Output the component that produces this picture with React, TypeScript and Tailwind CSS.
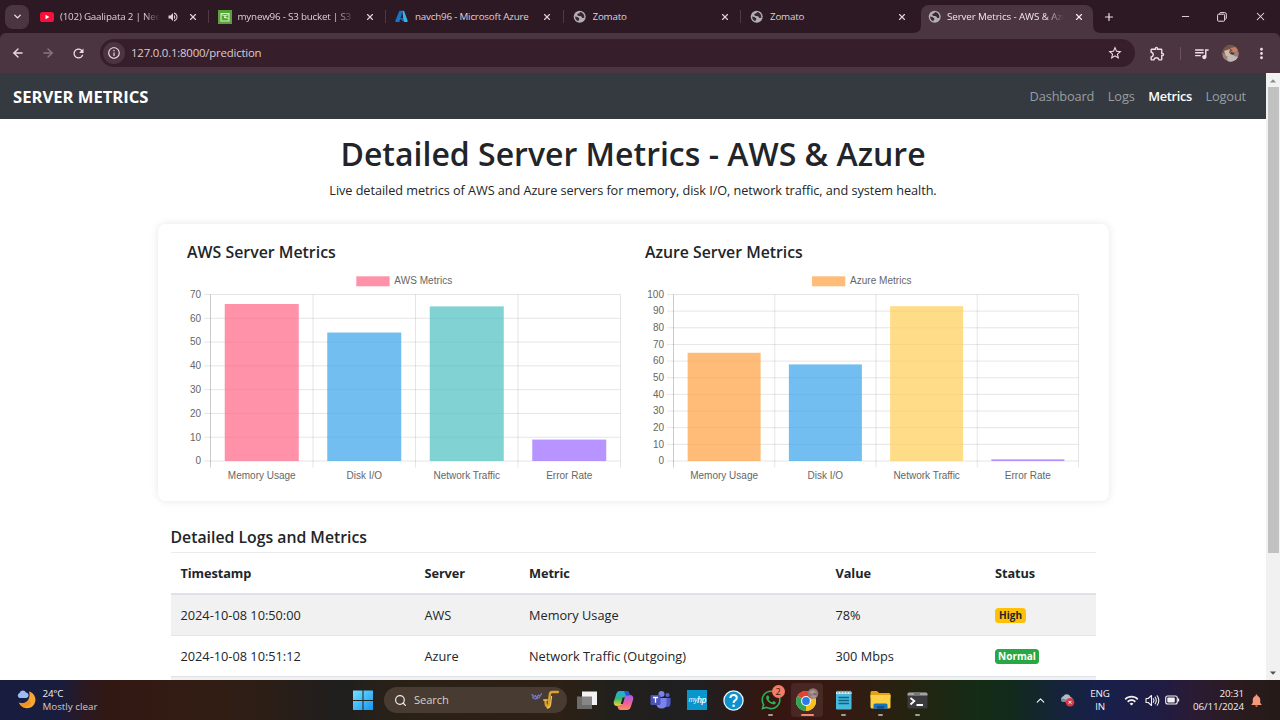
import type { ReactNode } from "react";
import { ArrowLeft, ArrowRight, ChevronDown, ChevronUp, Minus, Plus, Search, X } from "lucide-react";
import { FaWhatsapp } from "react-icons/fa";
import {
  MdInfoOutline,
  MdMoreVert,
  MdNotifications,
  MdOutlineExtension,
  MdQueueMusic,
  MdRefresh,
  MdStarBorder,
  MdVolumeUp,
  MdWifi,
} from "react-icons/md";

type TabInfo = { title: string; icon: ReactNode; audio?: boolean; fade?: boolean };

const YouTubeIcon = () => (
  <svg width="14" height="14" viewBox="0 0 14 14">
    <rect x="0" y="2" width="14" height="10" rx="2.6" fill="#f4113a" />
    <path d="M5.5 4.7v4.6L9.4 7z" fill="#fff" />
  </svg>
);

const BucketIcon = () => (
  <svg width="14" height="14" viewBox="0 0 14 14">
    <rect width="14" height="14" fill="#57a33a" />
    <path d="M3 3.500h8v7.500H3z" fill="none" stroke="#d8f0c8" strokeWidth="1.1" />
    <path d="M3 4c1 2 7 2 8 0M6.500 7l4 1.500" fill="none" stroke="#d8f0c8" strokeWidth="1" />
    <circle cx="7" cy="7.300" r="1" fill="#e8f8dc" />
  </svg>
);

const AzureIcon = () => (
  <svg width="13" height="13" viewBox="0 0 13 13">
    <path d="M4.5.8h3.2L4.3 11.9H1.2Q0 11.9.3 10.8z" fill="#1576c9" />
    <path d="M7.4.8h1.2q.4 0 .6.5l3.5 9.8q.2.8-.6.8H9.4L4.6 8.5h3.6z" fill="#38b3ec" />
    <path d="M4.6 8.5h3.6l1.2 3.4z" fill="#0b5fae" />
  </svg>
);

const Globe = () => (
  <svg width="14" height="14" viewBox="0 0 14 14">
    <circle cx="6.7" cy="6.7" r="6" fill="#b3afb1" />
    <path d="M7 2.100q-.3 1.600-1.700 1.500-1.300.1-1 1.500.2.900 1.900.8 2.200-.2 2.500 1.200.2 1.100 1.300.9l1.300-.2q.3-2.300-1.100-4Q8.900 2.300 7 2.100" fill="#3a2530" />
    <path d="M2.100 6.600q2.500.3 3.700 1.300 1.200.9.200 1.800-.8.500-.6 1.500Q2.200 10.300 2.100 6.600" fill="#3a2530" />
  </svg>
);

const tabs: TabInfo[] = [
  { title: "(102) Gaalipata 2 | Neer", icon: <YouTubeIcon />, audio: true, fade: true },
  { title: "mynew96 - S3 bucket | S3 |", icon: <BucketIcon />, fade: true },
  { title: "navch96 - Microsoft Azure", icon: <AzureIcon /> },
  { title: "Zomato", icon: <Globe /> },
  { title: "Zomato", icon: <Globe /> },
];

function Tab({ tab, last }: { tab: TabInfo; last: boolean }) {
  return (
    <div className="flex h-full w-[177.5px] shrink-0 items-center pl-[9px]">
      <span className="flex w-[20px] shrink-0 items-center">{tab.icon}</span>
      <span
        className={`block overflow-hidden text-[9.8px] leading-4 tracking-[-0.2px] whitespace-nowrap ${tab.audio ? "w-[100px]" : "w-[117px]"} ${tab.fade ? "[mask-image:linear-gradient(to_right,#000_84%,transparent)]" : ""}`}
      >
        {tab.title}
      </span>
      {tab.audio && <MdVolumeUp size={12} className="ml-[7px] shrink-0" />}
      <X size={10} strokeWidth={2.8} className={`shrink-0 ${tab.audio ? "ml-[9px]" : "ml-[10px]"}`} />
      {!last && <span className="ml-auto h-[13px] w-px bg-[#513944]" />}
    </div>
  );
}

function TabStrip() {
  return (
    <div className="flex h-[33px] shrink-0 bg-[#2d1924] text-[#dfd0d7]">
      <div className="flex w-[31px] shrink-0 items-center pl-[5px]">
        <span className="flex size-6 items-center justify-center rounded-lg bg-[#4b3540]">
          <ChevronDown size={11} strokeWidth={3} color="#f0e2e8" />
        </span>
      </div>
      {tabs.map((t, i) => (
        <Tab key={i} tab={t} last={i === tabs.length - 1} />
      ))}
      <div className="mt-[5px] flex shrink-0">
        <svg className="mt-5 -ml-[6px] shrink-0" width="8" height="8" viewBox="0 0 8 8">
          <path d="M8 0v8H0Q8 8 8 0" fill="#4b3540" />
        </svg>
        <div className="flex h-7 w-[172px] items-center rounded-t-[8px] bg-[#4b3540] pb-[5px] pl-[7px] text-[#f5e6ec]">
          <span className="w-[19.500px] shrink-0">
            <Globe />
          </span>
          <span className="block w-[117px] overflow-hidden text-[9.8px] leading-4 tracking-[-0.1px] whitespace-nowrap [mask-image:linear-gradient(to_right,#000_84%,transparent)]">
            Server Metrics - AWS &amp; Azure
          </span>
          <X size={10} strokeWidth={2.8} className="ml-[10px] shrink-0" />
        </div>
        <svg className="mt-5 shrink-0" width="8" height="8" viewBox="0 0 8 8">
          <path d="M0 0v8h8Q0 8 0 0" fill="#4b3540" />
        </svg>
      </div>
      <div className="flex flex-1 items-center text-[#efdde5]">
        <Plus size={12} strokeWidth={2.4} className="ml-[2px]" />
        <Minus size={11} strokeWidth={2} className="ml-[65px]" />
        <svg className="ml-[26px]" width="10" height="10" viewBox="0 0 10 10" fill="none" stroke="currentColor">
          <rect x=".6" y="2.2" width="7" height="7" rx="1" />
          <path d="M2.6 1.9V1.4Q2.7.6 3.5.6h4.2Q9.3.6 9.3 2.2v4q0 .9-1 1.1" />
        </svg>
        <X size={13} strokeWidth={1.9} className="ml-[27px]" />
      </div>
    </div>
  );
}

function Toolbar() {
  return (
    <div className="flex h-10 shrink-0 bg-[#2d1924]">
      <div className="flex flex-1 items-center rounded-t-[6px] bg-[#4b3540] text-[#f0dce5]">
        <ArrowLeft size={14} strokeWidth={2.3} className="ml-[11px]" />
        <ArrowRight size={14} strokeWidth={2.3} className="ml-[16px] text-[#8d7681]" />
        <MdRefresh size={15} className="ml-[16px]" />
        <div className="ml-[14px] flex h-7 w-[1035px] items-center rounded-full bg-[#361f2b] pr-[12px] pl-[3px]">
          <span className="flex size-[22px] items-center justify-center rounded-full bg-[#4b3540]">
            <MdInfoOutline size={14} />
          </span>
          <span className="ml-[6px] text-[11.4px] tracking-[-0.2px] text-[#dccbd3]">127.0.0.1:8000/prediction</span>
          <MdStarBorder size={16} className="ml-auto" />
        </div>
        <MdOutlineExtension size={17} className="ml-[14px]" />
        <span className="ml-[14px] h-[13px] w-px bg-[#6d525f]" />
        <MdQueueMusic size={17} className="ml-[12px]" />
        <svg className="ml-[12px]" width="17" height="17" viewBox="0 0 17 17">
          <clipPath id="avatar">
            <circle cx="8.5" cy="8.5" r="8.3" />
          </clipPath>
          <g clipPath="url(#avatar)">
            <rect width="17" height="17" fill="#9c8078" />
            <path d="M0 0h17v7L11 5 6 9 0 8z" fill="#735347" />
            <path d="M8 3l6-1 2 4-4 1z" fill="#c77d62" />
            <path d="M2 6l6-2-1 4 5 2-2 3-6-2z" fill="#cfbaac" />
            <path d="M5 12l7-1 4 1-3 5H6z" fill="#c2b8b6" />
            <path d="M9 7l4 1-2 2-3-1z" fill="#4f3d3b" />
          </g>
        </svg>
        <MdMoreVert size={17} className="ml-[14px]" />
      </div>
    </div>
  );
}

type Bar = { label: string; value: number; color: string };
type ChartProps = {
  name: string;
  legendX: number;
  left: number;
  axis: number;
  step: number;
  max: number;
  barWidth: number;
  bars: Bar[];
};

const TOP = 294.5;
const BASE = 461;

function BarChart({ name, legendX, left, axis, step, max, barWidth, bars }: ChartProps) {
  const ticks = Array.from({ length: max / 10 + 1 }, (_, i) => i * 10);
  const y = (v: number) => BASE - (v / max) * (BASE - TOP);
  const right = axis + step * 4;
  return (
    <svg
      className="block font-['Liberation_Sans',Arial,sans-serif] text-[10px]"
      width={right - left + 1}
      height="215"
      viewBox={`${left} 270 ${right - left + 1} 215`}
      fill="#666"
    >
      <rect x={legendX} y="276.3" width="33.3" height="10" fill={bars[0].color} />
      <text x={legendX + 38} y="284.3" textLength={name === "AWS Metrics" ? 58 : 61.5}>
        {name}
      </text>
      {ticks.map((t) => (
        <g key={t}>
          <line x1={axis - 6.5} x2={right} y1={y(t)} y2={y(t)} stroke="#000" strokeOpacity=".1" />
          <text x={axis - 9.5} y={y(t) + 3.3} textAnchor="end">
            {t}
          </text>
        </g>
      ))}
      {[0, 1, 2, 3, 4].map((i) => (
        <line
          key={i}
          x1={axis + i * step}
          x2={axis + i * step}
          y1={TOP}
          y2={BASE + 6.5}
          stroke="#000"
          strokeOpacity={i === 0 ? 0.2 : 0.1}
        />
      ))}
      {bars.map((b, i) => (
        <g key={b.label}>
          <rect
            x={axis + (i + 0.5) * step - barWidth / 2}
            y={y(b.value)}
            width={barWidth}
            height={BASE - y(b.value)}
            fill={b.color}
          />
          <text x={axis + (i + 0.5) * step} y="478.8" textAnchor="middle">
            {b.label}
          </text>
        </g>
      ))}
    </svg>
  );
}

const aws: Bar[] = [
  { label: "Memory Usage", value: 66, color: "rgba(255,99,132,.7)" },
  { label: "Disk I/O", value: 54, color: "rgba(54,162,235,.7)" },
  { label: "Network Traffic", value: 65, color: "rgba(75,192,192,.7)" },
  { label: "Error Rate", value: 9, color: "rgba(153,102,255,.7)" },
];

const azure: Bar[] = [
  { label: "Memory Usage", value: 65, color: "rgba(255,159,64,.7)" },
  { label: "Disk I/O", value: 58, color: "rgba(54,162,235,.7)" },
  { label: "Network Traffic", value: 93, color: "rgba(255,205,86,.7)" },
  { label: "Error Rate", value: 1, color: "rgba(153,102,255,.7)" },
];

const columns = "grid grid-cols-[244px_104.5px_306.5px_159.5px_1fr] items-center pl-[10px]";

function LogsTable() {
  return (
    <div className="w-[925px] text-[12.75px] text-[#212529]">
      <div className={`${columns} h-[43px] border-t border-b-2 border-[#dee2e6] border-t-[#e9ecee] pt-[2px] font-bold tracking-[-0.08px]`}>
        <span>Timestamp</span>
        <span>Server</span>
        <span>Metric</span>
        <span>Value</span>
        <span>Status</span>
      </div>
      <div className={`${columns} h-[40px] bg-[#f1f1f1] pt-[2px]`}>
        <span>2024-10-08 10:50:00</span>
        <span>AWS</span>
        <span>Memory Usage</span>
        <span>78%</span>
        <span className="flex h-[15.500px] w-[31px] items-center justify-center rounded-[3.5px] bg-[#ffc107] text-[10px] font-bold">
          High
        </span>
      </div>
      <div className={`${columns} h-[41px] border-t border-[#e4e7ea] pt-[2px]`}>
        <span>2024-10-08 10:51:12</span>
        <span>Azure</span>
        <span>Network Traffic (Outgoing)</span>
        <span>300 Mbps</span>
        <span className="flex h-[15.500px] w-[44px] items-center justify-center rounded-[3.5px] bg-[#28a745] text-[10px] font-bold text-white">
          Normal
        </span>
      </div>
      <div className="h-[40px] border-t border-[#dee2e6] bg-[#f1f1f1]" />
    </div>
  );
}

function Page() {
  return (
    <div className="flex h-[607px] shrink-0 overflow-hidden bg-white">
      <div className="flex w-[1266px] flex-col items-center text-[#212529]">
        <nav className="flex h-[46px] w-full shrink-0 items-center bg-[#343a40] pt-[2px] pr-5 pl-[13px] text-[12.8px] tracking-[-0.15px] text-[#9a9da0]">
          <span className="mr-auto text-[16.600px] font-bold tracking-normal text-white">SERVER METRICS</span>
          <span>Dashboard</span>
          <span className="ml-[13.5px]">Logs</span>
          <span className="ml-[13.5px] font-semibold tracking-[-0.3px] text-white">Metrics</span>
          <span className="ml-[13.5px]">Logout</span>
        </nav>
        <h1 className="mt-[15px] text-[32px] leading-10 font-semibold whitespace-nowrap">
          Detailed Server Metrics - AWS &amp; Azure
        </h1>
        <p className="mt-[6px] text-[12.7px] leading-5 tracking-[-0.055px] whitespace-nowrap">
          Live detailed metrics of AWS and Azure servers for memory, disk I/O, network traffic, and system health.
        </p>
        <section className="mt-[24px] flex h-[277px] w-[951px] shrink-0 rounded-[8px] bg-white pt-[18px] pl-[29.5px] shadow-[0_0_9px_rgba(0,0,0,0.1)]">
          <div className="w-[458px] shrink-0">
            <h3 className="mb-[8px] text-[15.900px] leading-5 font-semibold">AWS Server Metrics</h3>
            <BarChart name="AWS Metrics" legendX={356.3} left={187} axis={210.5} step={102.5} max={70} barWidth={74} bars={aws} />
          </div>
          <div>
            <h3 className="mb-[8px] text-[15.800px] leading-5 font-semibold">Azure Server Metrics</h3>
            <BarChart name="Azure Metrics" legendX={812} left={645} axis={673.5} step={101.25} max={100} barWidth={73} bars={azure} />
          </div>
        </section>
        <div className="mt-[26px] w-[925px]">
          <h3 className="mb-[4.5px] text-[15.800px] leading-5 font-semibold">Detailed Logs and Metrics</h3>
          <LogsTable />
        </div>
      </div>
      <div className="flex w-[14px] flex-col items-center bg-[#f1f1f1]">
        <svg width="14" height="14" viewBox="0 0 14 14">
          <path d="M4 9.5 7 6.2l3 3.3z" fill="#8b8b8b" />
        </svg>
        <div className="h-[466px] w-[11px] bg-[#c1c1c1]" />
        <svg className="mt-auto" width="14" height="14" viewBox="0 0 14 14">
          <path d="M4 5.5 7 8.8l3-3.3z" fill="#505050" />
        </svg>
      </div>
    </div>
  );
}

const CopilotIcon = () => (
  <svg width="21" height="21" viewBox="0 0 21 21">
    <defs>
      <linearGradient id="cpA" x1="0" y1="0" x2="0" y2="1">
        <stop offset="0" stopColor="#25a9ef" />
        <stop offset=".5" stopColor="#35b777" />
        <stop offset="1" stopColor="#f4d431" />
      </linearGradient>
      <linearGradient id="cpB" x1="0" y1="0" x2="0" y2="1">
        <stop offset="0" stopColor="#a45cf0" />
        <stop offset=".55" stopColor="#ee5f9e" />
        <stop offset="1" stopColor="#fb9254" />
      </linearGradient>
    </defs>
    <path d="M6.5 1h7q2 0 2.6 2l.7 2.5h-3q-1.6 0-2.2 1.8l-1.8 6Q9 16 6.500 16H4Q.5 16 .7 12L3.300 3.800Q4 1 6.500 1" fill="url(#cpA)" />
    <path d="M14.500 20h-7q-2 0-2.600-2l-.7-2.500h3q1.600 0 2.200-1.800l1.800-6Q12 5 14.500 5H17q3.500 0 3.300 4l-2.600 8.200Q17 20 14.500 20" fill="url(#cpB)" />
    <path d="M11 1h2.500q2 0 2.600 2l.7 2.500H13z" fill="#2a55d0" />
    <path d="m9.700 7.500-2 6.500h2.100l2-6.500z" fill="#242020" />
  </svg>
);

const TeamsIcon = () => (
  <svg width="21" height="20" viewBox="0 0 21 20">
    <circle cx="11.500" cy="4" r="3" fill="#7b83eb" />
    <circle cx="17.500" cy="5" r="2.100" fill="#5b63c8" />
    <path d="M14 8h6.500v5.500q0 3.500-3.500 3.500h-3z" fill="#5059c9" />
    <path d="M6.500 8h10v5.500q0 5-5 5t-5-5z" fill="#7b83eb" />
    <rect x=".5" y="5" width="10" height="10" rx="1" fill="#4b53bc" />
    <path d="M3 7.500h5M5.500 7.500v5.300" stroke="#fff" strokeWidth="1.300" />
  </svg>
);

const ChromeIcon = () => (
  <svg width="24" height="24" viewBox="0 0 24 24">
    <circle cx="11" cy="13" r="10" fill="#fff" />
    <path d="M11 13 2.340 8A10 10 0 0 1 19.660 8z" fill="#e5412f" />
    <path d="M11 13 19.660 8A10 10 0 0 1 11 23z" fill="#fbc11b" />
    <path d="M11 13v10A10 10 0 0 1 2.340 8z" fill="#32a350" />
    <path d="m11 23 4.300-7.500L11 13z" fill="#fbc11b" />
    <circle cx="11" cy="13" r="4.900" fill="#fff" />
    <circle cx="11" cy="13" r="3.900" fill="#2d7bea" />
    <circle cx="18" cy="5.500" r="5.300" fill="#8d7778" />
    <path d="m14 4 4-2 3 2-2 3-3-1z" fill="#ab9690" />
    <path d="m15 8 4-1 3 1-3 3z" fill="#a69492" />
    <path d="m18 5 3 1-2 1z" fill="#5c494b" />
  </svg>
);

const NotepadIcon = () => (
  <svg width="18" height="20" viewBox="0 0 18 20">
    <rect x="1" y="1.500" width="15.500" height="18" rx="1.200" fill="#48b9dc" />
    <path d="M1 4h15.500V2.500q0-1-1-1H2q-1 0-1 1z" fill="#d5edf4" />
    <path d="M3 .5v3M6 .5v3M9 .5v3M12 .5v3M15 .5v3" stroke="#6d8b96" strokeWidth="1" />
    <path d="M3.500 7.500h10.500M3.500 10.500h10.500M3.500 13.500h10.500" stroke="#0d6484" strokeWidth="1.300" />
  </svg>
);

const FolderIcon = () => (
  <svg width="21" height="20" viewBox="0 0 21 20">
    <path d="M.5 2.500q0-1.500 1.500-1.500h5l2 2H19q1.500 0 1.500 1.500V8H.5z" fill="#e5a014" />
    <path d="M.5 5h20v12q0 1.500-1.500 1.500H2q-1.500 0-1.500-1.500z" fill="#fcd044" />
    <path d="M3.500 18.800V15q0-1.500 1.500-1.500h11q1.500 0 1.500 1.500v3.800z" fill="#1670ba" />
    <path d="M7 16h7v2.800H7z" fill="#0d538e" />
  </svg>
);

const TerminalIcon = () => (
  <svg width="21" height="17" viewBox="0 0 21 17">
    <rect x=".5" y=".5" width="20" height="16" rx="1.500" fill="#3b3b3c" />
    <path d="M.5 3.500V2Q.5.5 2 .5h17q1.500 0 1.500 1.500v1.500z" fill="#a3a3a3" />
    <path d="M7 .5h6v2.500H7z" fill="#777" />
    <path d="m3.500 6 3.800 3-3.800 3.500M9.500 13H16" fill="none" stroke="#fff" strokeWidth="1.800" />
  </svg>
);

const HelpIcon = () => (
  <svg width="21" height="21" viewBox="0 0 21 21">
    <circle cx="10.500" cy="10.500" r="9.600" fill="#0e91cf" stroke="#e8f5fb" strokeWidth="1.300" />
    <path d="M7.300 8q.2-3 3.300-3 3.200 0 3.200 2.700 0 1.600-1.700 2.600-1.500.9-1.500 2.700" fill="none" stroke="#fff" strokeWidth="2" />
    <circle cx="10.600" cy="15.700" r="1.300" fill="#fff" />
  </svg>
);

function Slot({ children, dot, active }: { children: ReactNode; dot?: boolean; active?: boolean }) {
  return (
    <div className="relative flex h-10 w-[36.65px] shrink-0 items-center justify-center">
      {active && <span className="absolute inset-x-[2px] top-[3px] bottom-[3px] rounded-[4px] bg-white/8" />}
      <span className="relative flex">{children}</span>
      {dot && <span className="absolute bottom-[4px] h-[2px] w-[5px] rounded-full bg-[#a59c96]" />}
      {active && <span className="absolute bottom-[4px] h-[2.500px] w-[13px] rounded-full bg-[#f48973]" />}
    </div>
  );
}

function Taskbar() {
  return (
    <div className="flex h-10 shrink-0 items-center bg-[linear-gradient(90deg,#181d40_0px,#191c3c_60px,#2b1820_85px,#321813_110px,#321d13_200px,#2b1e16_270px,#1f1f1f_340px,#2a2116_400px,#2d2014_560px,#20201e_620px,#211f20_700px,#321711_760px,#3a1511_800px,#331b12_850px,#26220f_900px,#142c16_980px,#112a1b_1010px,#15233a_1060px,#17204b_1100px,#201c43_1160px,#2a1b36_1190px,#2a1b1e_1240px,#251a18_1280px)] text-[#f3f0ef]">
      <div className="flex w-[352px] items-center pl-[16px]">
        <svg className="-mt-[3px]" width="20" height="20" viewBox="0 0 20 20">
          <path d="M13 2.500a8.500 8.500 0 1 1-10 11.300q7 1.500 9.500-3.300 1.800-4 .5-8" fill="#f7a832" />
          <path d="M3 13.800q7 1.500 9.500-3.300 4 3 .5 6-5 3.500-10-2.700" fill="#ef9022" />
          <path d="M3.500 9a2.700 2.700 0 0 1 0-5A3.500 3.500 0 0 1 10 3.500 2.800 2.800 0 0 1 10.500 9z" fill="#9dbcf4" />
        </svg>
        <div className="ml-[6.500px] text-[9.800px] leading-[13.500px]">
          <div className="tracking-[-0.2px]">24°C</div>
          <div className="text-[#d5c9c4]">Mostly clear</div>
        </div>
      </div>
      <svg className="ml-px shrink-0" width="20" height="20" viewBox="0 0 20 20">
        <defs>
          <linearGradient id="win" x1="0" y1="0" x2="1" y2="1">
            <stop offset="0" stopColor="#74e1fc" />
            <stop offset="1" stopColor="#1595f2" />
          </linearGradient>
        </defs>
        <path d="M0 .5h9.500V10H0zM10.500.5H20V10h-9.500zM0 11h9.500v9H0zM10.500 11H20v9h-9.500z" fill="url(#win)" />
      </svg>
      <div className="ml-[11px] flex h-[26px] w-[183px] shrink-0 items-center rounded-full bg-[#483b31] pr-[6px] pl-[10px]">
        <Search size={13} strokeWidth={2.200} />
        <span className="ml-[7px] pt-px text-[11.200px] tracking-[-0.1px] text-[#d8d0ca]">Search</span>
        <svg className="ml-auto" width="34" height="22" viewBox="0 0 34 22" fill="none" strokeLinecap="round">
          <path d="m5 5.500 1.500 2 2-.8 1 2 2-2.500 1.500 1 1.500-2.500M5.500 8.500l3 1.500 4-1.500" stroke="#7478c6" strokeWidth="1.300" />
          <path d="M31 3h-6q-2 0-2.300 3l-1 9q-.6 3.200-2 2.200-1.200-1-1.200-5" stroke="#dda22e" strokeWidth="2.300" />
          <path d="M16.700 11h3.600M24.500 7.500l-1 8q-.6 3-3 3.500" stroke="#f3ca57" strokeWidth="1.300" />
        </svg>
      </div>
      <div className="ml-[2px] flex">
        <Slot>
          <svg width="21" height="19" viewBox="0 0 21 19">
            <rect x="5" y=".5" width="15" height="13.500" fill="#f2f2f2" />
            <rect x="0" y="5.500" width="15" height="12.500" fill="#767676" fillOpacity=".88" />
          </svg>
        </Slot>
        <Slot>
          <CopilotIcon />
        </Slot>
        <Slot>
          <TeamsIcon />
        </Slot>
        <Slot>
          <span className="flex size-[20px] items-center justify-center bg-[#0b95cd] text-[7px] tracking-[-0.500px] text-white italic">
            my<b className="text-[8.500px] font-semibold">hp</b>
          </span>
        </Slot>
        <Slot>
          <HelpIcon />
        </Slot>
        <Slot dot>
          <FaWhatsapp size={22} color="#2bb258" />
          <span className="absolute -top-[4px] left-[12px] flex size-[13px] items-center justify-center rounded-full bg-[#f47b65] text-[9px] leading-none text-[#3a1511]">
            2
          </span>
        </Slot>
        <Slot active>
          <ChromeIcon />
        </Slot>
        <Slot dot>
          <NotepadIcon />
        </Slot>
        <Slot dot>
          <FolderIcon />
        </Slot>
        <Slot dot>
          <TerminalIcon />
        </Slot>
      </div>
      <div className="ml-auto flex items-center pr-[16px] text-[9.800px] leading-[13.500px]">
        <ChevronUp size={13} strokeWidth={2.200} />
        <svg className="ml-[13px]" width="15" height="14" viewBox="0 0 15 14">
          <path d="M3 9a3 3 0 0 1 .3-5.700A4 4 0 0 1 10.500 4 3 3 0 0 1 12 9z" fill="#b3bac6" />
          <path d="M1 6q3-2 7 3H3Q1 9 1 6" fill="#7e8796" />
          <circle cx="10" cy="9.300" r="4.300" fill="#d43b47" />
          <path d="m8.600 7.900 2.800 2.800m0-2.800-2.800 2.800" stroke="#fff" strokeWidth="1" />
        </svg>
        <div className="ml-[13px] w-[24px] text-center tracking-[-0.2px]">
          ENG
          <br />
          IN
        </div>
        <MdWifi size={15} className="ml-[12px]" />
        <svg className="ml-[6px]" width="15" height="13" viewBox="0 0 15 13" fill="none" stroke="currentColor" strokeWidth="1.100" strokeLinejoin="round" strokeLinecap="round">
          <path d="M1 4.500h2.200L6.500 1.500v10L3.200 8.500H1zM8.300 4.700q1.300 1.800 0 3.600M10.200 3.200q2.200 3.300 0 6.600M12.200 1.800q3.200 4.700 0 9.400" />
        </svg>
        <svg className="ml-[5px]" width="15" height="10" viewBox="0 0 15 10">
          <rect x=".7" y="1" width="11.600" height="8" rx="2" fill="none" stroke="currentColor" strokeWidth="1.100" />
          <rect x="2.300" y="2.600" width="7.500" height="4.800" rx=".8" fill="currentColor" />
          <path d="M13.500 3.500v3" stroke="currentColor" strokeWidth="1.300" />
        </svg>
        <div className="ml-[10px] w-[54px] text-right tracking-[-0.1px] whitespace-nowrap">
          20:31
          <br />
          06/11/2024
        </div>
        <MdNotifications size={15} className="ml-[5px] text-[#f7977b]" />
      </div>
    </div>
  );
}

export default function App() {
  return (
    <div className="flex h-[720px] w-[1280px] flex-col overflow-hidden font-['Open_Sans','Noto_Sans',sans-serif]">
      <TabStrip />
      <Toolbar />
      <Page />
      <Taskbar />
    </div>
  );
}
